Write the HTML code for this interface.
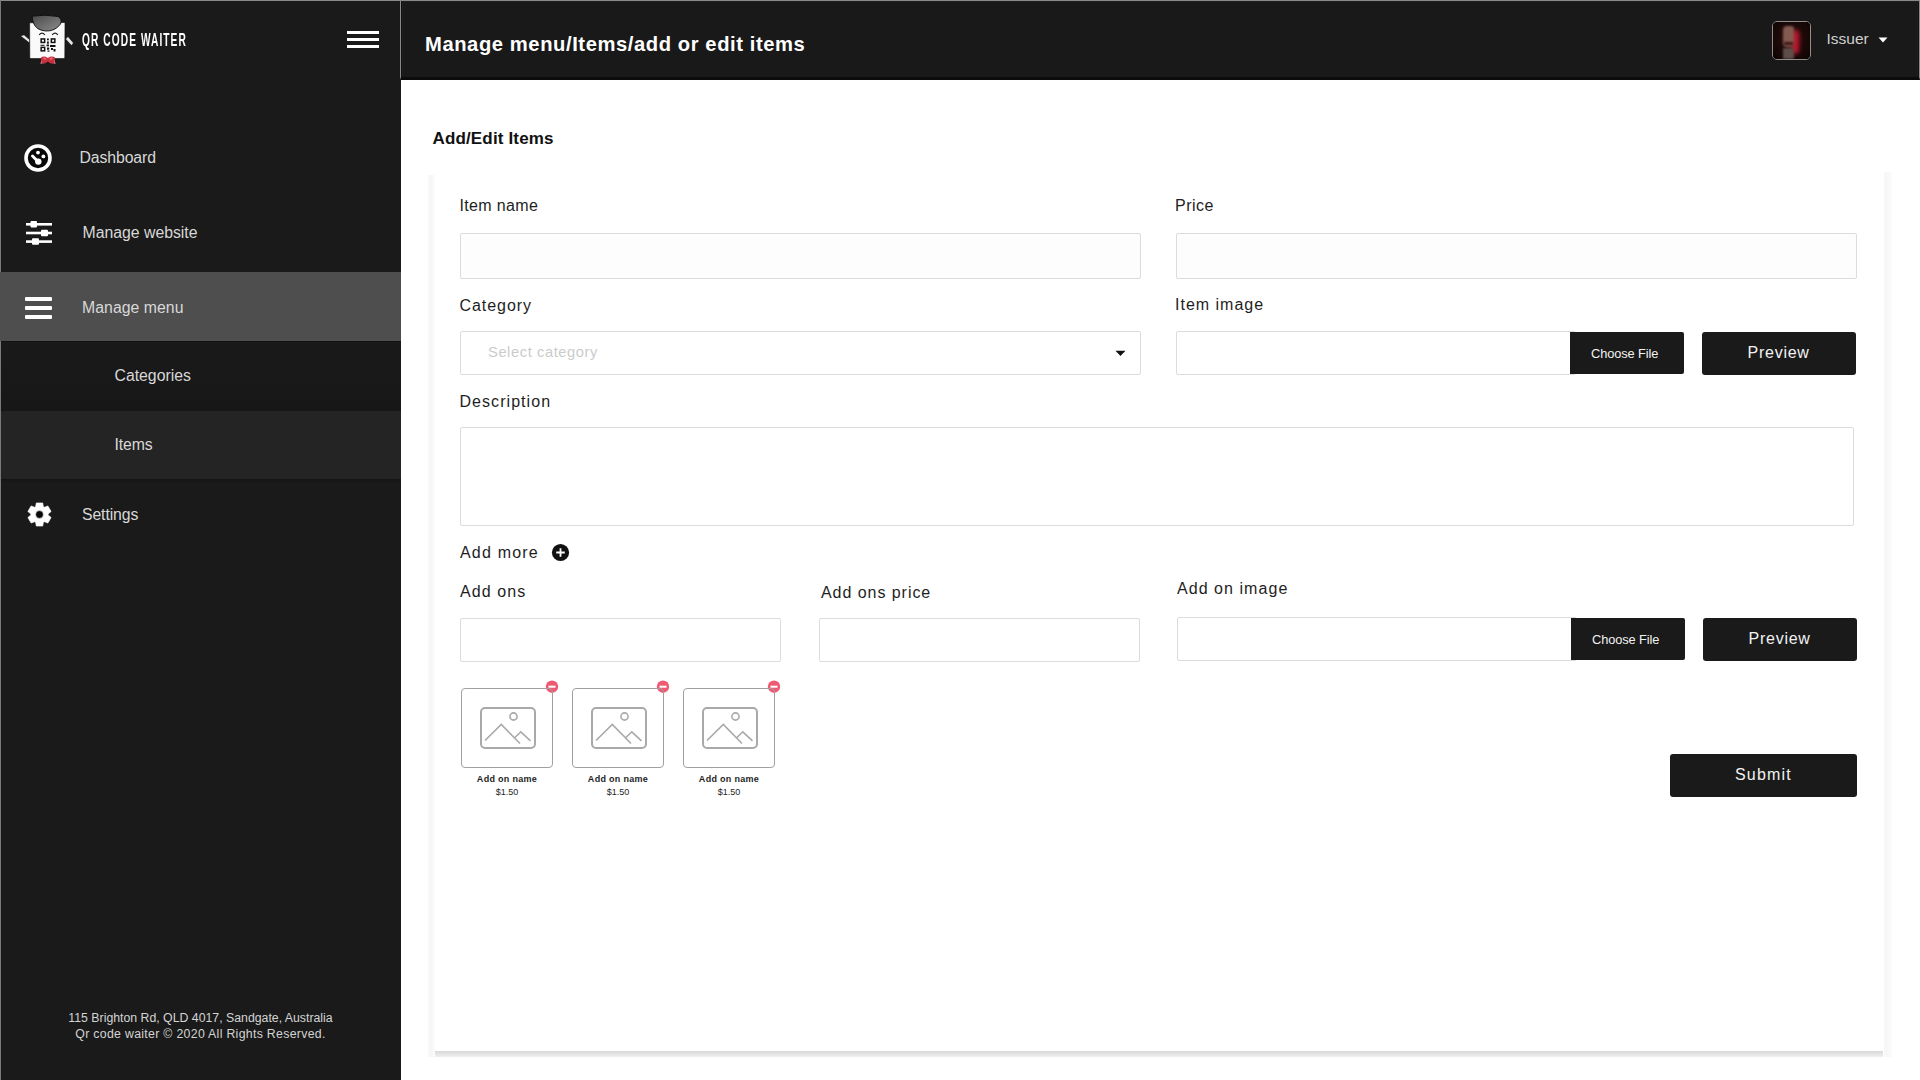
<!DOCTYPE html>
<html><head><meta charset="utf-8"><title>QR Code Waiter - Add/Edit Items</title>
<style>
*{margin:0;padding:0;box-sizing:border-box}
html,body{width:1920px;height:1080px;overflow:hidden;background:#fff;font-family:"Liberation Sans",sans-serif}
.a{position:absolute}
.t{position:absolute;white-space:nowrap}
#side{left:0;top:0;width:401px;height:1080px;background:#1a1a1a}
#topb{left:0;top:0;width:1920px;height:1px;background:#8a8a8a;z-index:5}
.leftb{left:0;width:1px;background:#7a7a7a;z-index:5}
#head{left:400px;top:0;width:1520px;height:80px;background:#191919;border-left:1px solid #8a8a8a;border-right:1px solid #8a8a8a;border-bottom:3px solid #0b0b0b;box-shadow:inset 1px 1px 0 #101010,inset 2px 2px 0 #1f1f1f,inset -1px 0 0 #101010,inset -2px 0 0 #1f1f1f}
.nav{color:#d8d8d8;font-size:15.8px;line-height:16px;letter-spacing:-0.1px}
.lbl{color:#1e1e1e;font-size:16px;line-height:16px}
.inp{position:absolute;border:1px solid #dcdcdc;border-radius:2px;background:#fdfdfd}
.btn{position:absolute;background:#1a1a1a;border-radius:3px}
.btxt{color:#f2f2f2}
#card{left:435px;top:175px;width:1449px;height:876px;background:#fff}
.ac{position:absolute;width:92px;height:80px;border:1px solid #a0a0a0;border-radius:4px;background:transparent}
.acn{font-size:9px;line-height:9px;font-weight:bold;color:#1e1e1e;letter-spacing:0.3px}
.acp{font-size:9px;line-height:9px;color:#1e1e1e}
</style></head>
<body>
<div id="topb" class="a"></div>
<div class="a leftb" style="top:0;height:272px"></div><div class="a leftb" style="top:341px;height:739px"></div>

<!-- SIDEBAR -->
<div id="side" class="a">
  <!-- logo -->
  <svg class="a" style="left:18px;top:12px" width="58" height="56" viewBox="0 0 58 56">
    <defs><linearGradient id="hg" x1="0" y1="0" x2="1" y2="1"><stop offset="0" stop-color="#4a4a4a"/><stop offset="1" stop-color="#8c8c8c"/></linearGradient></defs>
    <path d="M2.5 24 L6 22.8 L12 28 L11.5 31 Z" fill="#e8e8e8" stroke="#0a0a0a" stroke-width="0.6"/>
    <path d="M47.5 27 L50 24.5 L55.5 31 L53.5 33.5 Z" fill="#e8e8e8" stroke="#0a0a0a" stroke-width="0.6"/>
    <path d="M11.6 10.8 L47 10.5 L46.8 45.5 Q46.5 46.5 45.5 46.5 L12.8 46.5 Q11.8 46.5 11.8 45.5 Z" fill="#fafafa" stroke="#0a0a0a" stroke-width="0.6"/>
    <path d="M14 4.2 Q27 2 40 4.5 Q44.5 7 42.5 12 Q37 19.5 27.5 19 Q18 18 15.5 11 Q14.5 7.5 14 4.2 Z" fill="url(#hg)" stroke="#0a0a0a" stroke-width="0.9"/>
    <path d="M21.2 22.8 Q24 19.5 26.8 22.8 M34.2 22.8 Q37 19.5 39.8 22.8" stroke="#222" stroke-width="1.3" fill="none"/>
    <g fill="#111">
      <rect x="22.4" y="26.2" width="5" height="5"/><rect x="32.6" y="26.2" width="5" height="5"/><rect x="22.4" y="34.6" width="5" height="5"/>
      <rect x="29" y="26.5" width="1.8" height="1.8"/><rect x="29" y="29.5" width="1.8" height="2.2"/><rect x="28.5" y="32.5" width="2.5" height="1.8"/>
      <rect x="32" y="33" width="5.5" height="2"/><rect x="29" y="35.5" width="2.2" height="2.2"/><rect x="33" y="36" width="2" height="2"/><rect x="35.5" y="37" width="2" height="2.5"/><rect x="29.5" y="38.5" width="2" height="1.2"/><rect x="22.5" y="32.8" width="4" height="1"/>
    </g>
    <g fill="#fafafa"><rect x="23.9" y="27.7" width="2" height="2"/><rect x="34.1" y="27.7" width="2" height="2"/><rect x="23.9" y="36.1" width="2" height="2"/></g>
    <path d="M22.5 52 L24 46.5 L26 50 Z M37.5 52 L36 46.5 L34 50 Z" fill="#e6f0ee"/>
    <path d="M23 45.5 Q26 43.5 29.8 46 Q33.5 43.5 37 45.5 L36.5 51.5 Q33 52.5 29.8 49.5 Q26.5 52.5 23.5 51.5 Z" fill="#c83040"/>
    <path d="M24.5 46 Q26.5 45 28.5 46.5 L27.5 48 Z M31 46.5 Q33 45 35.5 46 L33 48 Z" fill="#e86870"/>
  </svg>
  <div class="t" id="brand" style="left:82px;top:31px;color:#fff;font-weight:bold;font-size:18.5px;line-height:18.5px;transform-origin:0 0;transform:scaleX(0.55);letter-spacing:1.95px">QR CODE WAITER</div>
  <!-- hamburger -->
  <div class="a" style="left:347px;top:31px;width:32px;height:3px;background:#fff"></div>
  <div class="a" style="left:347px;top:38px;width:32px;height:3px;background:#fff"></div>
  <div class="a" style="left:347px;top:45px;width:32px;height:3px;background:#fff"></div>

  <!-- Dashboard -->
  <svg class="a" style="left:23px;top:143px" width="30" height="30" viewBox="0 0 30 30">
    <circle cx="15" cy="15" r="10.5" fill="#080808"/>
    <circle cx="15" cy="15" r="12" stroke="#fff" stroke-width="3.6" fill="none"/>
    <circle cx="15" cy="9.6" r="1.9" fill="#fff"/>
    <circle cx="20.4" cy="13.4" r="1.9" fill="#fff"/>
    <path d="M9.5 13 L14 17.5" stroke="#fff" stroke-width="3" stroke-linecap="round"/>
    <circle cx="15.3" cy="18.6" r="3.2" fill="#fff"/>
  </svg>
  <div class="t nav" style="left:79.5px;top:150px">Dashboard</div>

  <!-- Manage website -->
  <svg class="a" style="left:25px;top:219px" width="28" height="28" viewBox="0 0 28 28">
    <g fill="#fff">
      <rect x="1" y="4" width="26" height="2.6"/>
      <rect x="1" y="12.7" width="26" height="2.6"/>
      <rect x="1" y="21.3" width="26" height="2.6"/>
      <rect x="5.5" y="2" width="6.5" height="6.5" rx="1"/>
      <rect x="16" y="10.8" width="7" height="6.5" rx="1"/>
      <rect x="7" y="19.2" width="7" height="6.5" rx="1"/>
    </g>
  </svg>
  <div class="t nav" style="left:82.5px;top:225px;letter-spacing:0px">Manage website</div>

  <!-- Manage menu (active) -->
  <div class="a" style="left:0;top:272px;width:401px;height:69px;background:#4e4e4e"></div>
  <div class="a" style="left:25px;top:297px;width:27px;height:4px;background:#fff;border-radius:1px"></div>
  <div class="a" style="left:25px;top:306px;width:27px;height:4px;background:#fff;border-radius:1px"></div>
  <div class="a" style="left:25px;top:315px;width:27px;height:4px;background:#fff;border-radius:1px"></div>
  <div class="t nav" style="left:82px;top:300px;letter-spacing:0.05px">Manage menu</div>

  <!-- sub: Categories -->
  <div class="a" style="left:0;top:341px;width:401px;height:70px;background:linear-gradient(#1a1a1a,#171717)"></div><div class="a" style="left:0;top:341px;width:401px;height:1px;background:#111"></div>
  <div class="t nav" style="left:114.5px;top:368px;letter-spacing:0px">Categories</div>
  <!-- sub: Items -->
  <div class="a" style="left:0;top:411px;width:401px;height:68px;background:#242424"></div>
  <div class="a" style="left:0;top:479px;width:401px;height:4px;background:linear-gradient(#141414,#1a1a1a)"></div>
  <div class="t nav" style="left:114.5px;top:437px">Items</div>

  <!-- Settings -->
  <svg class="a" style="left:27.4px;top:502.4px" width="25" height="25" viewBox="0 0 25 25"><circle cx="12.5" cy="12.5" r="4" fill="#080808"/><path fill="#fff" fill-rule="evenodd" stroke="#fff" stroke-width="0.6" stroke-linejoin="round" d="M8.60 4.84 L9.29 0.94 L15.71 0.94 L16.40 4.84 L17.18 5.29 L20.91 3.94 L24.12 9.50 L21.09 12.05 L21.09 12.95 L24.12 15.50 L20.91 21.06 L17.18 19.71 L16.40 20.16 L15.71 24.06 L9.29 24.06 L8.60 20.16 L7.82 19.71 L4.09 21.06 L0.88 15.50 L3.91 12.95 L3.91 12.05 L0.88 9.50 L4.09 3.94 L7.82 5.29 Z M16.40 12.50 A3.9 3.9 0 1 0 8.60 12.50 A3.9 3.9 0 1 0 16.40 12.50 Z"/></svg>
  <div class="t nav" style="left:82px;top:507px">Settings</div>

  <!-- footer -->
  <div class="t" style="left:0;width:401px;text-align:center;top:1009.7px;color:#d4d4d4;font-size:12.3px;line-height:16px">115 Brighton Rd, QLD 4017, Sandgate, Australia</div><div class="t" style="left:0;width:401px;text-align:center;top:1025.5px;color:#d4d4d4;font-size:12.3px;line-height:16px;letter-spacing:0.31px">Qr code waiter © 2020 All Rights Reserved.</div>
</div>

<!-- HEADER -->
<div id="head" class="a">
  <div class="t" style="left:24px;top:33.5px;color:#fff;font-weight:bold;font-size:20.2px;line-height:20.2px;letter-spacing:0.58px">Manage menu/Items/add or edit items</div>
  <div class="a" style="left:1371px;top:21px;width:39px;height:39px;border:1px solid #928d89;border-radius:5px;background:#140707;overflow:hidden">
    <div class="a" style="left:0;top:0;width:37px;height:37px;background:radial-gradient(circle at 50% 45%,#3a1a16 0,#1e0a08 45%,#0c0404 100%)"></div>
    <div class="a" style="left:18px;top:8px;width:8px;height:24px;background:#c0162f;border-radius:4px;filter:blur(2px)"></div>
    <div class="a" style="left:10px;top:4px;width:11px;height:21px;background:#845a50;border-radius:4px 3px 4px 4px;filter:blur(1px)"></div><div class="a" style="left:11px;top:20px;width:9px;height:3px;background:#3a1512;filter:blur(0.8px)"></div>
    <div class="a" style="left:10px;top:26px;width:11px;height:11px;background:#5e4e4a;filter:blur(1.2px)"></div>
  </div>
  <div class="t" style="left:1425.5px;top:31px;color:#d0d0d0;font-size:15.5px;line-height:15.5px">Issuer</div>
  <svg class="a" style="left:1477px;top:37px" width="10" height="6" viewBox="0 0 10 6"><path d="M0.5 0.5 L9.5 0.5 L5 5.5 Z" fill="#fff"/></svg>
</div>

<!-- MAIN -->
<div class="t" style="left:432.5px;top:129.6px;color:#111;font-weight:bold;font-size:17px;line-height:17px;letter-spacing:0.15px">Add/Edit Items</div>
<div id="card" class="a"></div>
<div class="a" style="left:428px;top:175px;width:7px;height:882px;background:linear-gradient(90deg,#f9f9f9,#f6f6f6 40%,#f9f9f9 80%,#fdfdfd)"></div>
<div class="a" style="left:1884px;top:172px;width:8px;height:885px;background:linear-gradient(90deg,#f7f7f7,#f8f8f8 60%,#fcfcfc)"></div>
<div class="a" style="left:435px;top:1051px;width:1448px;height:6px;background:linear-gradient(#d9d9d9,#e4e4e4 50%,#f0f0f0)"></div>

<div class="t lbl" style="left:459.5px;top:198px;letter-spacing:0.35px">Item name</div>
<div class="inp" style="left:460px;top:233px;width:681px;height:46px"></div>
<div class="t lbl" style="left:1175px;top:198px;letter-spacing:0.5px">Price</div>
<div class="inp" style="left:1176px;top:233px;width:681px;height:46px"></div>

<div class="t lbl" style="left:459.5px;top:298.2px;letter-spacing:0.95px">Category</div>
<div class="inp" style="left:460px;top:331px;width:681px;height:44px;background:#fff"></div>
<div class="t" style="left:488px;top:345.3px;color:#cbcbcb;font-size:14.7px;line-height:14.7px;letter-spacing:0.58px">Select category</div>
<svg class="a" style="left:1115px;top:350px" width="11" height="7" viewBox="0 0 11 7"><path d="M0.5 0.8 L10.5 0.8 L5.5 6 Z" fill="#111"/></svg>

<div class="t lbl" style="left:1175px;top:297.2px;letter-spacing:1.0px">Item image</div>
<div class="inp" style="left:1176px;top:331px;width:400px;height:44px;background:#fff"></div>
<div class="btn" style="left:1570px;top:332px;width:114px;height:42px;border-radius:0 2px 2px 0"></div>
<div class="t btxt" style="left:1591px;top:347.5px;font-size:12.8px;line-height:12.8px;letter-spacing:-0.1px">Choose File</div>
<div class="btn" style="left:1702px;top:332px;width:154px;height:43px"></div>
<div class="t btxt" style="left:1747.5px;top:345px;font-size:16px;line-height:16px;letter-spacing:0.75px">Preview</div>

<div class="t lbl" style="left:459.5px;top:393.5px;letter-spacing:1.05px">Description</div>
<div class="inp" style="left:460px;top:427px;width:1394px;height:99px;background:#fff"></div>

<div class="t lbl" style="left:460px;top:544.5px;letter-spacing:1.2px">Add more</div>
<svg class="a" style="left:551px;top:543px" width="19" height="19" viewBox="0 0 19 19"><circle cx="9.5" cy="9.5" r="8.6" fill="#111"/><path d="M9.5 5.2 V13.8 M5.2 9.5 H13.8" stroke="#fff" stroke-width="1.8"/></svg>

<div class="t lbl" style="left:460px;top:584.2px;letter-spacing:1.1px">Add ons</div>
<div class="inp" style="left:460px;top:618px;width:321px;height:44px;background:#fff"></div>
<div class="t lbl" style="left:821px;top:584.5px;letter-spacing:0.95px">Add ons price</div>
<div class="inp" style="left:819px;top:618px;width:321px;height:44px;background:#fff"></div>
<div class="t lbl" style="left:1177px;top:580.5px;letter-spacing:1.05px">Add on image</div>
<div class="inp" style="left:1177px;top:617px;width:400px;height:44px;background:#fff"></div>
<div class="btn" style="left:1571px;top:618px;width:114px;height:42px;border-radius:0 2px 2px 0"></div>
<div class="t btxt" style="left:1592px;top:633.8px;font-size:12.8px;line-height:12.8px;letter-spacing:-0.1px">Choose File</div>
<div class="btn" style="left:1703px;top:618px;width:154px;height:43px"></div>
<div class="t btxt" style="left:1748.5px;top:630.5px;font-size:16px;line-height:16px;letter-spacing:0.75px">Preview</div>

<div class="btn" style="left:1670px;top:754px;width:187px;height:43px"></div>
<div class="t btxt" style="left:1735px;top:766.5px;font-size:16px;line-height:16px;letter-spacing:1.2px">Submit</div>

<!-- add-on cards -->
<svg class="a" style="left:461px;top:680px" width="110" height="100" viewBox="0 0 110 100">
  <g transform="translate(0,8)">
  <rect x="20" y="20" width="54" height="40" rx="4" fill="none" stroke="#a9a9a9" stroke-width="2"/>
  <circle cx="52.5" cy="28.5" r="3.6" fill="none" stroke="#a9a9a9" stroke-width="1.6"/>
  <path d="M24 52.5 L40.3 36.5 L59 55.5 M54 49.5 L59.8 43.8 L69.5 52.8" fill="none" stroke="#a9a9a9" stroke-width="1.6"/>
  <circle cx="91" cy="-1.3" r="6.2" fill="#ee5a74"/>
  <rect x="87.5" y="-2.3" width="7" height="2" fill="#fff"/>
  </g>
</svg>
<div class="t acn" style="left:457px;width:100px;text-align:center;top:775.2px">Add on name</div>
<div class="t acp" style="left:457px;width:100px;text-align:center;top:788px">$1.50</div>
<svg class="a" style="left:572px;top:680px" width="110" height="100" viewBox="0 0 110 100">
  <g transform="translate(0,8)">
  <rect x="20" y="20" width="54" height="40" rx="4" fill="none" stroke="#a9a9a9" stroke-width="2"/>
  <circle cx="52.5" cy="28.5" r="3.6" fill="none" stroke="#a9a9a9" stroke-width="1.6"/>
  <path d="M24 52.5 L40.3 36.5 L59 55.5 M54 49.5 L59.8 43.8 L69.5 52.8" fill="none" stroke="#a9a9a9" stroke-width="1.6"/>
  <circle cx="91" cy="-1.3" r="6.2" fill="#ee5a74"/>
  <rect x="87.5" y="-2.3" width="7" height="2" fill="#fff"/>
  </g>
</svg>
<div class="t acn" style="left:568px;width:100px;text-align:center;top:775.2px">Add on name</div>
<div class="t acp" style="left:568px;width:100px;text-align:center;top:788px">$1.50</div>
<svg class="a" style="left:683px;top:680px" width="110" height="100" viewBox="0 0 110 100">
  <g transform="translate(0,8)">
  <rect x="20" y="20" width="54" height="40" rx="4" fill="none" stroke="#a9a9a9" stroke-width="2"/>
  <circle cx="52.5" cy="28.5" r="3.6" fill="none" stroke="#a9a9a9" stroke-width="1.6"/>
  <path d="M24 52.5 L40.3 36.5 L59 55.5 M54 49.5 L59.8 43.8 L69.5 52.8" fill="none" stroke="#a9a9a9" stroke-width="1.6"/>
  <circle cx="91" cy="-1.3" r="6.2" fill="#ee5a74"/>
  <rect x="87.5" y="-2.3" width="7" height="2" fill="#fff"/>
  </g>
</svg>
<div class="t acn" style="left:679px;width:100px;text-align:center;top:775.2px">Add on name</div>
<div class="t acp" style="left:679px;width:100px;text-align:center;top:788px">$1.50</div>

<div class="ac" style="left:461px;top:688px"></div>
<div class="ac" style="left:572px;top:688px"></div>
<div class="ac" style="left:683px;top:688px"></div>

</body></html>
